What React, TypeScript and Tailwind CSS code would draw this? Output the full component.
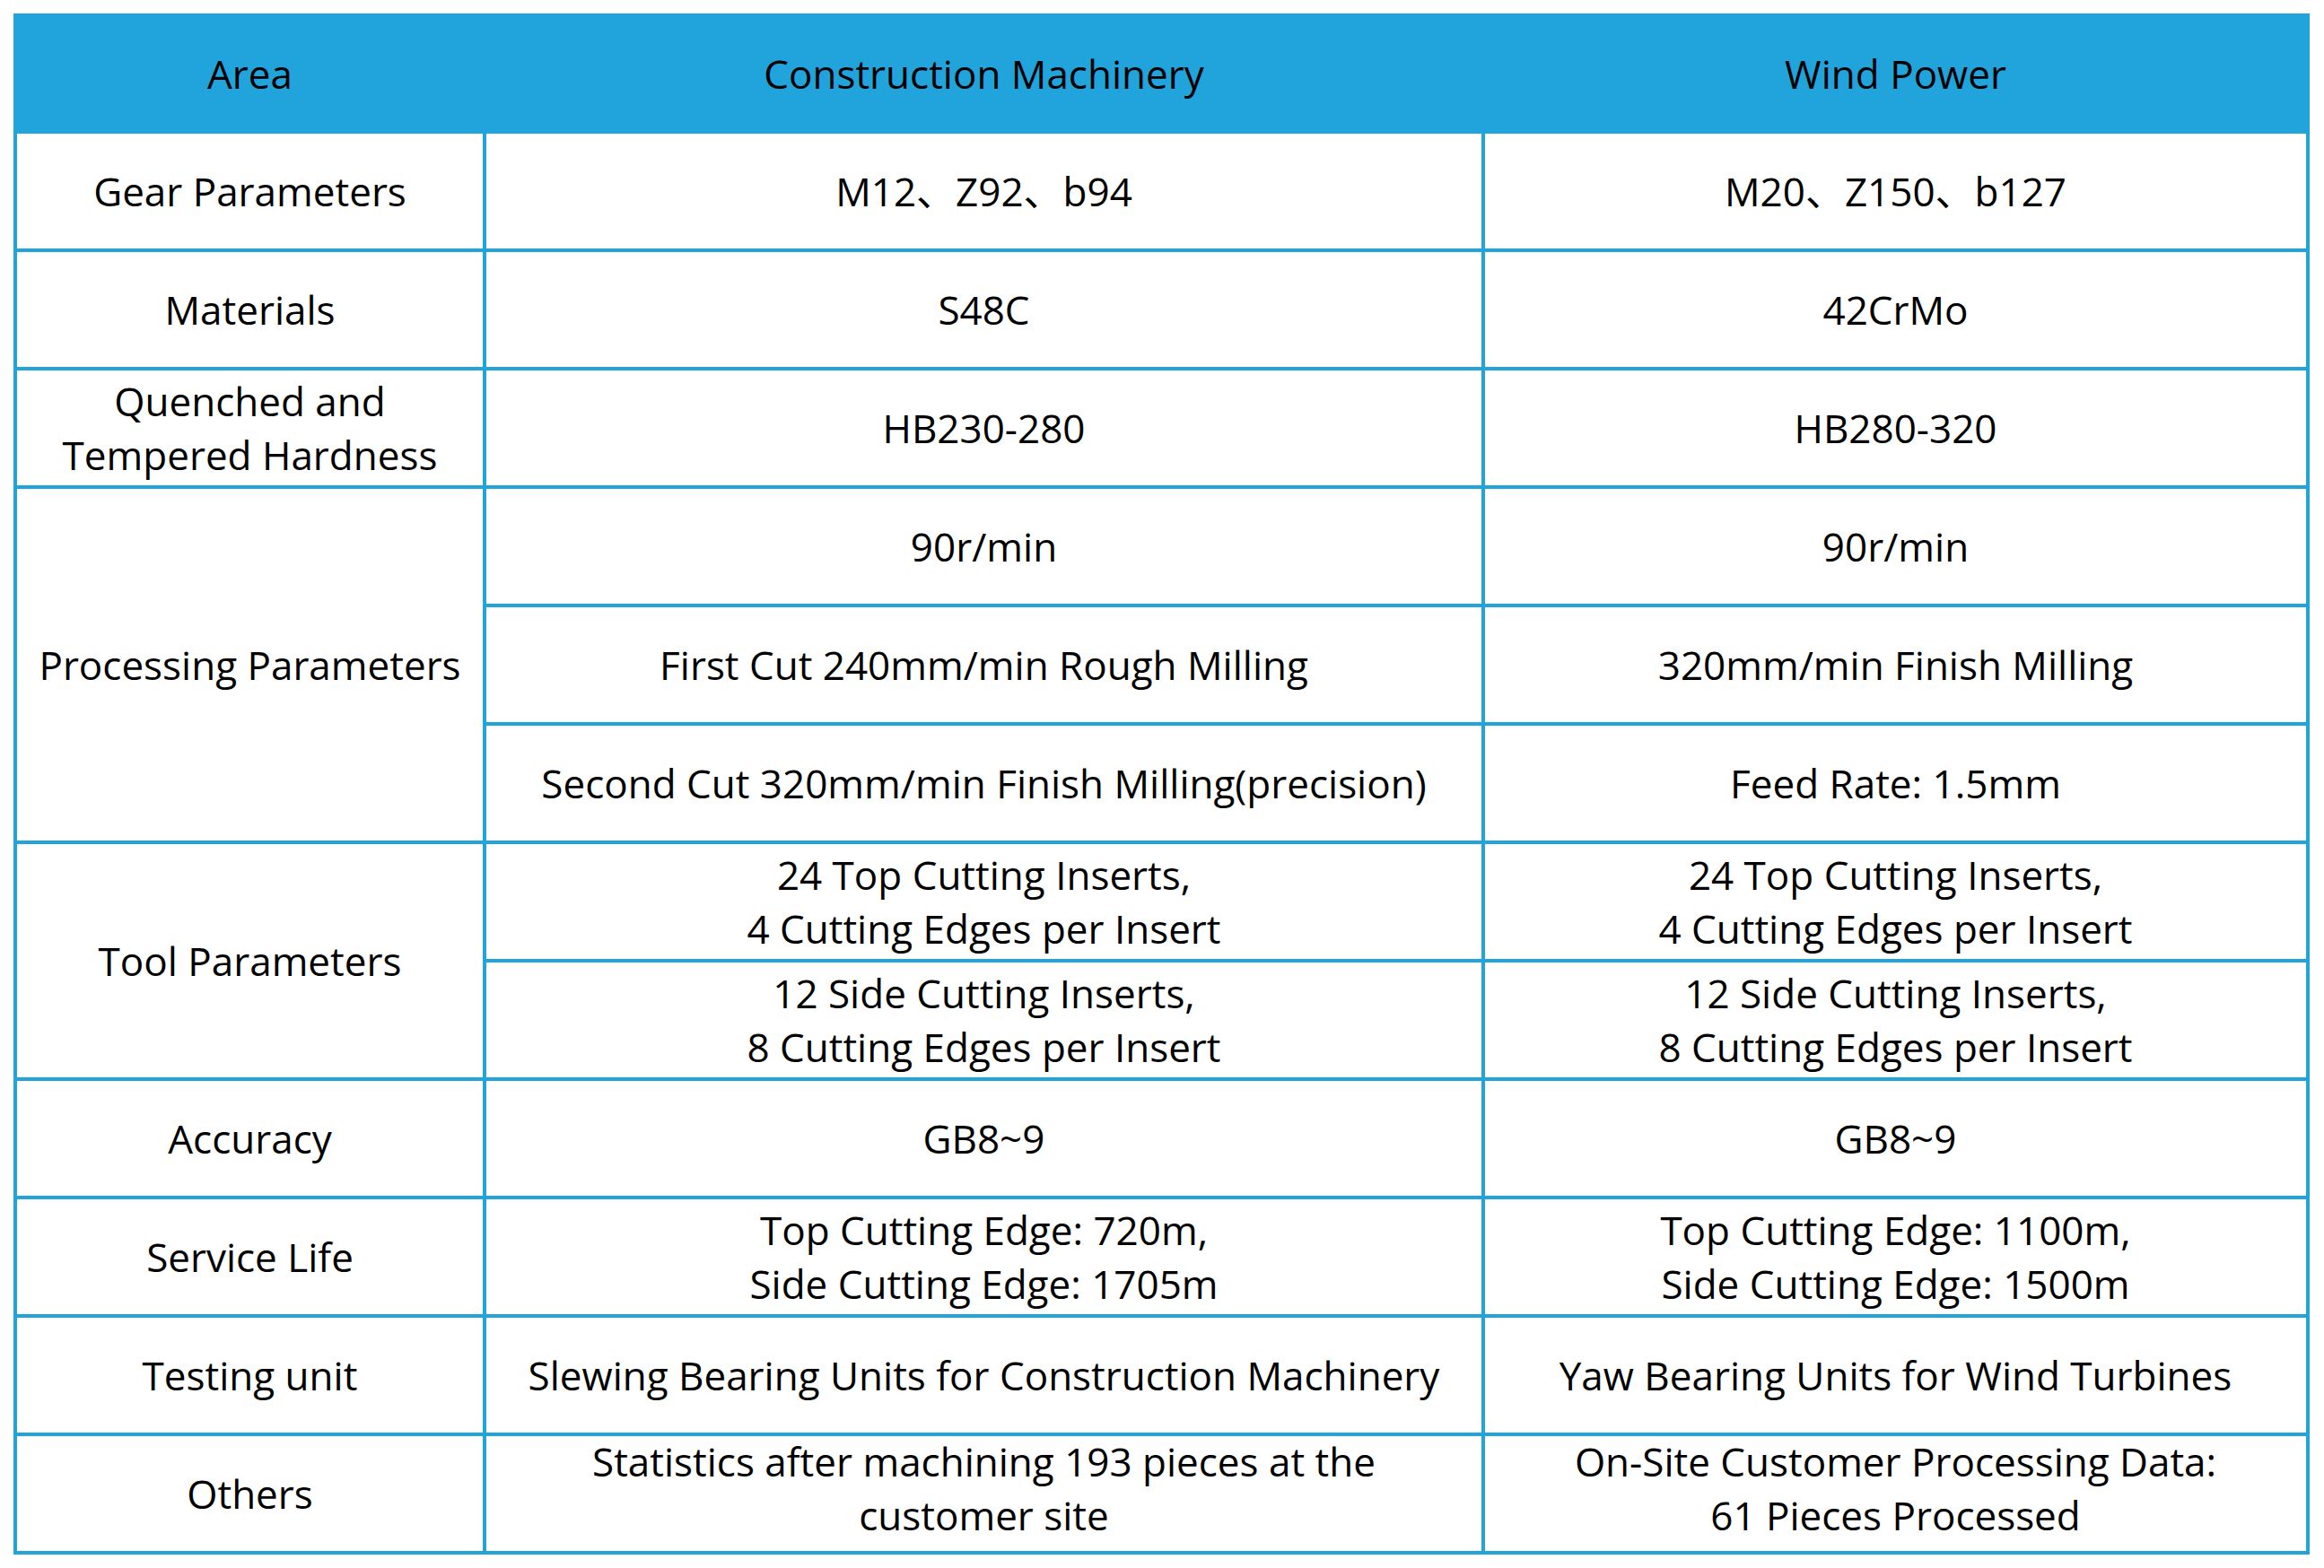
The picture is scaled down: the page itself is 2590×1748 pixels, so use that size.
const rows: { label?: string; span?: number; cm: string[]; wp: string[]; lift?: boolean }[] = [
  { label: 'Gear Parameters', cm: ['M12、Z92、b94'], wp: ['M20、Z150、b127'] },
  { label: 'Materials', cm: ['S48C'], wp: ['42CrMo'] },
  { label: 'Quenched and\nTempered Hardness', cm: ['HB230-280'], wp: ['HB280-320'] },
  { label: 'Processing Parameters', span: 3, cm: ['90r/min'], wp: ['90r/min'] },
  { cm: ['First Cut 240mm/min Rough Milling'], wp: ['320mm/min Finish Milling'] },
  { cm: ['Second Cut 320mm/min Finish Milling(precision)'], wp: ['Feed Rate: 1.5mm'] },
  {
    label: 'Tool Parameters',
    span: 2,
    cm: ['24 Top Cutting Inserts,', '4 Cutting Edges per Insert'],
    wp: ['24 Top Cutting Inserts,', '4 Cutting Edges per Insert'],
  },
  {
    cm: ['12 Side Cutting Inserts,', '8 Cutting Edges per Insert'],
    wp: ['12 Side Cutting Inserts,', '8 Cutting Edges per Insert'],
  },
  { label: 'Accuracy', cm: ['GB8~9'], wp: ['GB8~9'] },
  {
    label: 'Service Life',
    cm: ['Top Cutting Edge: 720m,', 'Side Cutting Edge: 1705m'],
    wp: ['Top Cutting Edge: 1100m,', 'Side Cutting Edge: 1500m'],
  },
  {
    label: 'Testing unit',
    cm: ['Slewing Bearing Units for Construction Machinery'],
    wp: ['Yaw Bearing Units for Wind Turbines'],
  },
  {
    label: 'Others',
    cm: ['Statistics after machining 193 pieces at the', 'customer site'],
    wp: ['On-Site Customer Processing Data:', '61 Pieces Processed'],
    lift: true,
  },
]

function Cell({ lines, className = '' }: { lines: string[]; className?: string }) {
  return (
    <div className={`bg-white flex flex-col items-center justify-center text-center ${className}`}>
      {lines.map((l, i) => (
        <span key={i}>{l}</span>
      ))}
    </div>
  )
}

export default function App() {
  return (
    <div className="min-h-screen bg-white pt-[15px] pl-[15px]">
      <div
        className="inline-grid grid-cols-[519px_1109px_915px] grid-rows-[126px_repeat(12,128px)] gap-[4px] p-[4px] bg-[#21a3dc] text-black text-[44px] leading-[60px]"
        style={{ fontFamily: '"Open Sans", "Noto Sans CJK SC", sans-serif' }}
      >
        {/* Header */}
        <div className="flex items-center justify-center">Area</div>
        <div className="flex items-center justify-center">Construction Machinery</div>
        <div className="flex items-center justify-center">Wind Power</div>

        {rows.map((r, i) => (
          <Row key={i} row={r} />
        ))}
      </div>
    </div>
  )
}

function Row({ row }: { row: (typeof rows)[number] }) {
  const spanClass = row.span === 3 ? 'row-span-3' : row.span === 2 ? 'row-span-2' : ''
  const lift = row.lift ? 'pb-[12px]' : ''
  return (
    <>
      {row.label && <Cell lines={row.label.split('\n')} className={`col-start-1 ${spanClass}`} />}
      <Cell lines={row.cm} className={`col-start-2 ${lift}`} />
      <Cell lines={row.wp} className={`col-start-3 ${lift}`} />
    </>
  )
}
